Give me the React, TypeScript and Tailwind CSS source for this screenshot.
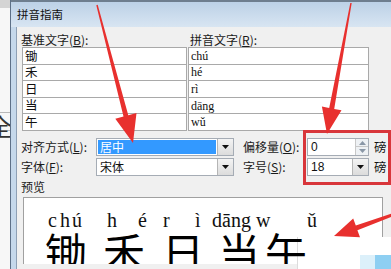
import React from "react";

const cjk = "font-['Noto_Sans_CJK_SC',sans-serif]";
const serif = "font-['Liberation_Serif','Noto_Sans_CJK_SC',serif]";

const rows = [
  { base: "锄", pinyin: "chú" },
  { base: "禾", pinyin: "hé" },
  { base: "日", pinyin: "rì" },
  { base: "当", pinyin: "dāng" },
  { base: "午", pinyin: "wǔ" },
];

const pinyinPreview = [
  { t: "c", x: "left-[24px]" },
  { t: "h", x: "left-[36px]" },
  { t: "ú", x: "left-[48px]" },
  { t: "h", x: "left-[83px]" },
  { t: "é", x: "left-[114px]" },
  { t: "r", x: "left-[139px]" },
  { t: "ì", x: "left-[171px]" },
  { t: "dāng", x: "left-[188px]" },
  { t: "w", x: "left-[232px]" },
  { t: "ǔ", x: "left-[283px]" },
];

const hanziPreview = [
  { t: "锄", x: "left-[21px]" },
  { t: "禾", x: "left-[79px]" },
  { t: "日", x: "left-[138px]" },
  { t: "当", x: "left-[194px]" },
  { t: "午", x: "left-[241px]" },
];

const DropButton: React.FC = () => (
  <div className="w-[16px] h-full border-l border-[#b5b5b5] bg-gradient-to-b from-[#f4f4f4] to-[#dcdcdc] flex items-center justify-center">
    <svg width="7" height="4" viewBox="0 0 7 4">
      <path d="M0 0h7L3.5 4z" fill="#111" />
    </svg>
  </div>
);

const SpinButton: React.FC = () => (
  <div className="w-[13px] h-full flex flex-col border-l border-[#c8c8c8] bg-[#eef1f4]">
    <div className="flex-1 flex items-center justify-center border-b border-[#c8c8c8]">
      <svg width="7" height="4" viewBox="0 0 7 4">
        <path d="M0 4h7L3.5 0z" fill="#8a97a6" />
      </svg>
    </div>
    <div className="flex-1 flex items-center justify-center">
      <svg width="7" height="4" viewBox="0 0 7 4">
        <path d="M0 0h7L3.5 4z" fill="#8a97a6" />
      </svg>
    </div>
  </div>
);

const Label: React.FC<{ text: string; hot: string; w: string }> = ({ text, hot, w }) => (
  <div className={`${w} text-[12px] leading-none text-[#1a1a1a] whitespace-nowrap`}>
    {text}(<u>{hot}</u>):
  </div>
);

const App: React.FC = () => {
  return (
    <div className={`relative w-[391px] h-[269px] overflow-hidden flex bg-white ${cjk}`}>
      {/* Word document behind the dialog */}
      <div className="relative w-[10px] h-full bg-[#f7f7f7] overflow-hidden">
        <div className="h-[8px] bg-[#d4d4d4]" />
        <div className="mt-[104px] h-px bg-[#b8b8b8]" />
        <div className="absolute left-[-12px] top-[114px] text-[24px] leading-none text-[#333]">全</div>
        <div className="mt-[17px] h-px bg-[#b8b8b8]" />
      </div>

      {/* Dialog */}
      <div className="flex-1 flex flex-col border-l border-[#5d7087]">
        <div className="h-[27px] border-t-2 border-[#6e7e8f] bg-gradient-to-b from-[#bcd1e7] to-[#d8e5f2] pl-[6px] flex items-center">
          <span className="text-[11.5px] leading-none text-[#111]">拼音指南</span>
        </div>

        <div className="flex-1 flex">
          <div className="w-[6px] bg-[#c5d8eb] border-r border-[#8ea0b5]" />
          <div className="flex-1 bg-[#f0f0f0] pl-[4px] flex flex-col">
            {/* Column headings */}
            <div className="mt-[6px] h-[14px] flex items-center">
              <Label text="基准文字" hot="B" w="w-[169px]" />
              <Label text="拼音文字" hot="R" w="w-[120px]" />
            </div>

            {/* Base / pinyin table */}
            <div className="ml-[1px] flex gap-px">
              <div className="w-[165px] border-t border-x border-[#a9a9a9] bg-white">
                {rows.map((r) => (
                  <div key={r.base} className="h-[16.6px] border-b border-[#a9a9a9] pl-[2px] flex items-center text-[12.5px] leading-none text-[#111]">
                    {r.base}
                  </div>
                ))}
              </div>
              <div className="w-[181px] border-t border-x border-[#a9a9a9] bg-white">
                {rows.map((r) => (
                  <div key={r.pinyin} className={`h-[16.6px] border-b border-[#a9a9a9] pl-[2px] flex items-center text-[12px] leading-none text-[#111] ${serif}`}>
                    {r.pinyin}
                  </div>
                ))}
              </div>
            </div>

            {/* Alignment / offset */}
            <div className="mt-[7px] h-[18px] flex items-center">
              <Label text="对齐方式" hot="L" w="w-[75px]" />
              <div className="w-[138px] h-full border border-[#a5acb5] bg-white flex">
                <div className="flex-1 m-px bg-[#3399ff] text-white text-[12px] leading-none flex items-center pl-[2px]">居中</div>
                <DropButton />
              </div>
              <div className="ml-[9px]">
                <Label text="偏移量" hot="O" w="w-[64px]" />
              </div>
              <div className="w-[62px] h-full border border-[#a5acb5] bg-white flex">
                <div className="flex-1 pl-[3px] flex items-center text-[12px] leading-none text-[#111] font-['Liberation_Sans',sans-serif]">0</div>
                <SpinButton />
              </div>
              <span className="ml-[5px] text-[12.5px] leading-none text-[#111]">磅</span>
            </div>

            {/* Font / size */}
            <div className="mt-[2px] h-[18px] flex items-center">
              <Label text="字体" hot="F" w="w-[75px]" />
              <div className="w-[138px] h-full border border-[#a5acb5] bg-white flex">
                <div className="flex-1 pl-[3px] text-[12px] leading-none text-[#111] flex items-center">宋体</div>
                <DropButton />
              </div>
              <div className="ml-[9px]">
                <Label text="字号" hot="S" w="w-[64px]" />
              </div>
              <div className="w-[62px] h-full border border-[#a5acb5] bg-white flex">
                <div className="flex-1 pl-[3px] flex items-center text-[12px] leading-none text-[#111] font-['Liberation_Sans',sans-serif]">18</div>
                <DropButton />
              </div>
              <span className="ml-[5px] text-[12.5px] leading-none text-[#111]">磅</span>
            </div>

            {/* Preview */}
            <div className="mt-[5px] h-[13px] text-[12px] leading-none text-[#1a1a1a]">预览</div>
            <div className="relative mt-[3px] ml-[2px] w-[360px] h-[67px] border-t border-x border-[#a0a0a0] bg-white">
              {pinyinPreview.map((p, i) => (
                <span key={i} className={`absolute top-[12px] ${p.x} text-[20px] leading-none text-[#111] ${serif}`}>
                  {p.t}
                </span>
              ))}
              <div className="absolute inset-0 overflow-hidden z-[3]">
                {hanziPreview.map((h) => (
                  <span key={h.t} className={`absolute top-[32px] ${h.x} text-[42px] leading-none text-black font-normal`}>
                    {h.t}
                  </span>
                ))}
              </div>
            </div>
          </div>
        </div>
      </div>

      {/* Pasted white patch in the lower right corner */}
      <div className="absolute left-[297px] top-[237px] w-[94px] h-[32px] bg-white border-l border-[#dcdcdc] z-[2] flex items-end justify-end">
        <div className="w-[15px] h-[14px] bg-[#dcf0fa]" />
        <div className="w-[16px] h-[14px] bg-[#8ecff2]" />
      </div>

      {/* Red annotation box */}
      <div className="absolute left-[303px] top-[130px] w-[88px] h-[55px] border-[3px] border-[#d8363b] z-[4]" />

      {/* Red annotation arrows */}
      <svg className="absolute left-0 top-0 z-[5] pointer-events-none" width="391" height="269" viewBox="0 0 391 269">
        <polygon fill="#e8302e" points="97.7,4.8 128.3,115.3 136.5,113.1 133,143 115.3,118.7 123.5,116.5 96.3,5.2" />
        <polygon fill="#e8302e" points="351.7,3.1 334.2,108.9 341.5,110.2 327,134 321.9,106.6 329.2,107.9 350.3,2.9" />
        <polygon fill="#e8302e" points="392.5,216.4 357.4,230.2 360,237.2 334,236 353.2,218.4 355.8,225.4 391.5,213.6" />
      </svg>
    </div>
  );
};

export default App;
